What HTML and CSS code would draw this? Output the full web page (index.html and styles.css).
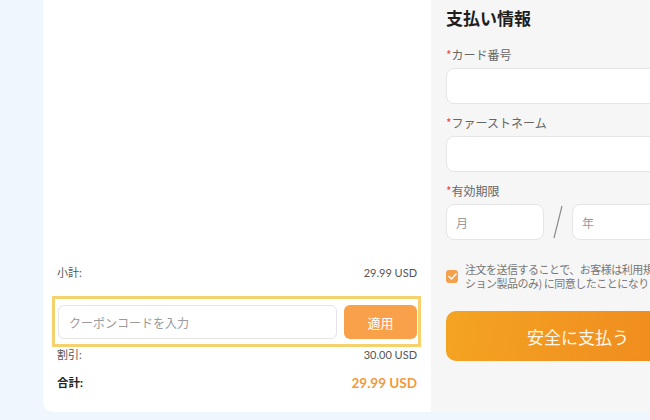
FILE: index.html
```html
<!DOCTYPE html>
<html lang="ja">
<head>
<meta charset="utf-8">
<title>支払い</title>
<link rel="stylesheet" href="styles.css">
</head>
<body>
<div class="page">
  <section class="summary">
    <div class="summary-rows">
      <div class="row subtotal"><span>小計:</span><span class="num">29.99 USD</span></div>
      <div class="coupon">
        <input class="coupon-input" type="text" placeholder="クーポンコードを入力">
        <button class="coupon-btn" type="button">適用</button>
      </div>
      <div class="row discount"><span>割引:</span><span class="num">30.00 USD</span></div>
      <div class="row total"><span>合計:</span><span class="num total-num">29.99 USD</span></div>
    </div>
  </section>
  <section class="payment">
    <h2 class="title">支払い情報</h2>
    <label class="label"><span class="req">*</span>カード番号</label>
    <input class="field" type="text">
    <label class="label"><span class="req">*</span>ファーストネーム</label>
    <input class="field" type="text">
    <label class="label"><span class="req">*</span>有効期限</label>
    <div class="expiry">
      <input class="field month" type="text" placeholder="月">
      <svg class="slash" width="12" height="34" viewBox="0 0 12 34"><line x1="10" y1="1" x2="2" y2="33" stroke="#8a8a8a" stroke-width="1.2"/></svg>
      <input class="field year" type="text" placeholder="年">
    </div>
    <div class="agree">
      <span class="check"><svg width="9" height="7" viewBox="0 0 9 7"><path d="M1 3.5 L3.5 6 L8 1" fill="none" stroke="#fff" stroke-width="1.5" stroke-linecap="round" stroke-linejoin="round"/></svg></span>
      <div class="agree-text">
        <span class="line">注文を送信することで、お客様は利用規約および返金ポリシー（サブスクリプ</span>
        <span class="line">ション製品のみ) に同意したことになります。</span>
      </div>
    </div>
    <button class="pay" type="button">安全に支払う</button>
  </section>
</div>
</body>
</html>
```

FILE: styles.css
```css
* { box-sizing: border-box; }
html, body {
  margin: 0;
  padding: 0;
  width: 650px;
  height: 420px;
  overflow: hidden;
  background: #eff6fd;
  font-family: Lato, "Noto Sans CJK JP", sans-serif;
}
.page {
  display: flex;
  width: 900px;
  height: 412px;
  padding-left: 43px;
}
.summary {
  width: 388px;
  height: 412px;
  background: #fff;
  border-radius: 0 0 0 10px;
  display: flex;
  flex-direction: column;
  justify-content: flex-end;
  padding: 0 14px 19px 14px;
}
.row {
  display: flex;
  justify-content: space-between;
  align-items: center;
  font-size: 11px;
  line-height: 16px;
  color: #555;
}
.subtotal { margin-bottom: 15px; }
.discount { margin-bottom: 10px; }
.total {
  line-height: 20px;
  font-weight: 700;
  color: #222;
  font-size: 11.5px;
}
.total-num {
  color: #f3993a;
  font-size: 13.5px;
}
.coupon {
  display: flex;
  gap: 7px;
  margin: 0 -4px 0 -5px;
  border: 3px solid #f6d26e;
  padding: 6px 1px 5px 3px;
}
.coupon-input {
  flex: 1;
  height: 34px;
  border: 1px solid #e4e4e4;
  border-radius: 6px;
  padding: 0 10px;
  font: 12px "Noto Sans CJK JP", sans-serif;
  color: #333;
  outline: none;
}
.coupon-input::placeholder { color: #9a9a9a; }
.coupon-btn {
  width: 73px;
  height: 34px;
  border: none;
  border-radius: 6px;
  background: #f9a14a;
  color: #fff;
  font: 13px "Noto Sans CJK JP", sans-serif;
}
.payment {
  width: 420px;
  height: 412px;
  background: #f6f6f6;
  padding: 6px 0 0 15px;
  display: flex;
  flex-direction: column;
  align-items: flex-start;
}
.title {
  margin: 0 0 17px 0;
  font: 700 17px/24px "Noto Sans CJK JP", sans-serif;
  color: #1e1e1e;
}
.label {
  font: 12px/16px "Noto Sans CJK JP", sans-serif;
  color: #666;
  margin-bottom: 5px;
}
.req { color: #e44b4b; }
.field {
  width: 264px;
  height: 36px;
  background: #fff;
  border: 1px solid #e5e5e5;
  border-radius: 8px;
  margin-bottom: 11px;
  padding: 0 9px;
  font: 12px "Noto Sans CJK JP", sans-serif;
  outline: none;
}
.field::placeholder { color: #9a9a9a; }
.expiry {
  display: flex;
  align-items: center;
  gap: 8px;
  margin-bottom: 11px;
}
.expiry .field { margin-bottom: 0; }
.month { width: 98px; }
.year { width: 98px; }
.slash { flex: none; }
.agree {
  display: flex;
  align-items: center;
  gap: 7px;
  margin-top: 11px;
}
.check {
  width: 12px;
  height: 13px;
  border-radius: 3px;
  background: #f5a04a;
  display: flex;
  align-items: center;
  justify-content: center;
}
.agree-text {
  font: 11px/14px "Noto Sans CJK JP", sans-serif;
  letter-spacing: -0.5px;
  color: #777;
}
.line {
  display: block;
  white-space: nowrap;
}
.pay {
  margin-top: 21px;
  width: 264px;
  height: 50px;
  border: none;
  border-radius: 10px;
  background: linear-gradient(100deg, #f4a422 0%, #f19220 60%, #ef881b 100%);
  color: #fff8ea;
  font: 17px "Noto Sans CJK JP", sans-serif;
}
```
